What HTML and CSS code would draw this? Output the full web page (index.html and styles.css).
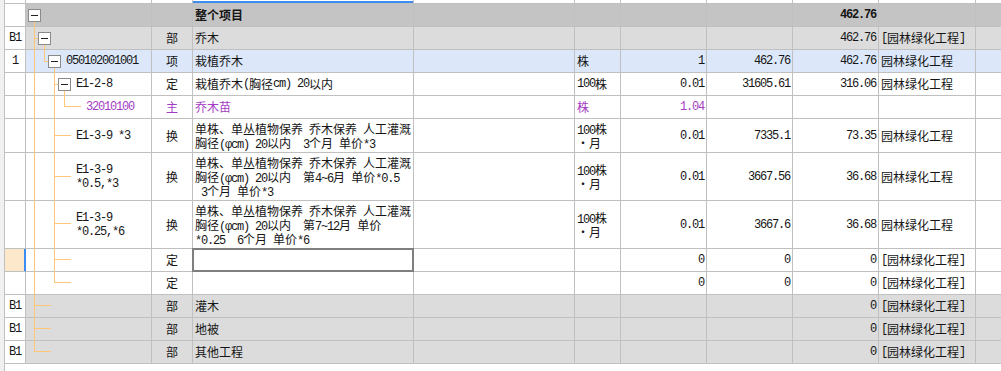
FILE: index.html
```html
<!DOCTYPE html>
<html lang="zh-CN">
<head>
<meta charset="utf-8">
<title>整个项目</title>
<link rel="stylesheet" href="styles.css">
</head>
<body>
<div class="page">
  <div class="strip"></div>
  <div class="grid">
    <div class="row hdr">
      <div></div><div></div><div></div><div class="sel"></div><div></div><div></div><div></div><div></div><div></div><div></div><div></div>
    </div>
    <div class="row g0">
      <div class="a"></div><div class="t"></div><div class="k"></div><div class="n b">整个项目</div><div></div><div></div><div class="num"></div><div class="num"></div><div class="num b">462.76</div><div class="j"></div><div></div>
    </div>
    <div class="row g1">
      <div class="a m">B1</div><div class="t"></div><div class="k">部</div><div class="n">乔木</div><div></div><div></div><div class="num"></div><div class="num"></div><div class="num">462.76</div><div class="j"><span class="m">[</span>园林绿化工程<span class="m">]</span></div><div></div>
    </div>
    <div class="row bl">
      <div class="a m">1</div><div class="t l2 m">050102001001</div><div class="k">项</div><div class="n">栽植乔木</div><div></div><div class="u">株</div><div class="num">1</div><div class="num">462.76</div><div class="num">462.76</div><div class="j">园林绿化工程</div><div></div>
    </div>
    <div class="row">
      <div class="a"></div><div class="t l3 m">E1-2-8</div><div class="k">定</div><div class="n">栽植乔木<span class="m">(</span>胸径<span class="m">cm) 20</span>以内</div><div></div><div class="u"><span class="m">100</span>株</div><div class="num">0.01</div><div class="num">31605.61</div><div class="num">316.06</div><div class="j">园林绿化工程</div><div></div>
    </div>
    <div class="row pu">
      <div class="a"></div><div class="t l4 m">32010100</div><div class="k">主</div><div class="n">乔木苗</div><div></div><div class="u">株</div><div class="num">1.04</div><div class="num"></div><div class="num"></div><div class="j"></div><div></div>
    </div>
    <div class="row h34">
      <div class="a"></div><div class="t l3 m">E1-3-9 *3</div><div class="k">换</div>
      <div class="n"><div class="ml">单株、单丛植物保养<span class="m"> </span>乔木保养<span class="m"> </span>人工灌溉<br>胸径<span class="m">(φcm) 20</span>以内<span class="m">  3</span>个月<span class="m"> </span>单价<span class="m">*3</span></div></div>
      <div></div><div class="u"><div class="ml"><span class="m">100</span>株<br><span class="dot">·</span>月</div></div><div class="num">0.01</div><div class="num">7335.1</div><div class="num">73.35</div><div class="j">园林绿化工程</div><div></div>
    </div>
    <div class="row h48">
      <div class="a"></div><div class="t l3 m"><div class="ml">E1-3-9<br>*0.5,*3</div></div><div class="k">换</div>
      <div class="n"><div class="ml">单株、单丛植物保养<span class="m"> </span>乔木保养<span class="m"> </span>人工灌溉<br>胸径<span class="m">(φcm) 20</span>以内<span class="m">  </span>第<span class="m">4~6</span>月<span class="m"> </span>单价<span class="m">*0.5</span><br><span class="m"> 3</span>个月<span class="m"> </span>单价<span class="m">*3</span></div></div>
      <div></div><div class="u"><div class="ml"><span class="m">100</span>株<br><span class="dot">·</span>月</div></div><div class="num">0.01</div><div class="num">3667.56</div><div class="num">36.68</div><div class="j">园林绿化工程</div><div></div>
    </div>
    <div class="row h48">
      <div class="a"></div><div class="t l3 m"><div class="ml">E1-3-9<br>*0.25,*6</div></div><div class="k">换</div>
      <div class="n"><div class="ml">单株、单丛植物保养<span class="m"> </span>乔木保养<span class="m"> </span>人工灌溉<br>胸径<span class="m">(φcm) 20</span>以内<span class="m">  </span>第<span class="m">7~12</span>月<span class="m"> </span>单价<br><span class="m">*0.25  6</span>个月<span class="m"> </span>单价<span class="m">*6</span></div></div>
      <div></div><div class="u"><div class="ml"><span class="m">100</span>株<br><span class="dot">·</span>月</div></div><div class="num">0.01</div><div class="num">3667.6</div><div class="num">36.68</div><div class="j">园林绿化工程</div><div></div>
    </div>
    <div class="row">
      <div class="a cur"></div><div class="t"></div><div class="k">定</div><div class="n edit"></div><div></div><div class="u"></div><div class="num">0</div><div class="num">0</div><div class="num">0</div><div class="j"><span class="m">[</span>园林绿化工程<span class="m">]</span></div><div></div>
    </div>
    <div class="row">
      <div class="a"></div><div class="t"></div><div class="k">定</div><div class="n"></div><div></div><div class="u"></div><div class="num">0</div><div class="num">0</div><div class="num">0</div><div class="j"><span class="m">[</span>园林绿化工程<span class="m">]</span></div><div></div>
    </div>
    <div class="row g1">
      <div class="a m">B1</div><div class="t"></div><div class="k">部</div><div class="n">灌木</div><div></div><div></div><div class="num"></div><div class="num"></div><div class="num">0</div><div class="j"><span class="m">[</span>园林绿化工程<span class="m">]</span></div><div></div>
    </div>
    <div class="row g1">
      <div class="a m">B1</div><div class="t"></div><div class="k">部</div><div class="n">地被</div><div></div><div></div><div class="num"></div><div class="num"></div><div class="num">0</div><div class="j"><span class="m">[</span>园林绿化工程<span class="m">]</span></div><div></div>
    </div>
    <div class="row g1">
      <div class="a m">B1</div><div class="t"></div><div class="k">部</div><div class="n">其他工程</div><div></div><div></div><div class="num"></div><div class="num"></div><div class="num">0</div><div class="j"><span class="m">[</span>园林绿化工程<span class="m">]</span></div><div></div>
    </div>
  </div>
  <svg class="tree" width="1001" height="371" viewBox="0 0 1001 371">
    <g fill="none" stroke="#ffc878" stroke-width="1">
      <path d="M34.5 22V352M35 38.5H38M35 305.5H51M35 328.5H51M35 351.5H51"/>
      <path d="M44.5 45V62M45 61.5H48"/>
      <path d="M54.5 68V283M55 84.5H58M55 135.5H71M55 176.5H71M55 223.5H71M55 259.5H71M55 282.5H71"/>
      <path d="M64.5 91V107M65 106.5H81"/>
    </g>
    <g fill="#fff" stroke="#8a8a8a" stroke-width="1">
      <rect x="28.5" y="9.5" width="12" height="12"/>
      <rect x="38.5" y="32.5" width="12" height="12"/>
      <rect x="48.5" y="55.5" width="12" height="12"/>
      <rect x="58.5" y="78.5" width="12" height="12"/>
    </g>
    <g stroke="#222" stroke-width="1">
      <path d="M31 15.5H38M41 38.5H48M51 61.5H58M61 84.5H68"/>
    </g>
  </svg>
</div>
</body>
</html>
```

FILE: styles.css
```css
* {
  box-sizing: border-box;
  margin: 0;
  padding: 0;
}

body {
  margin: 0;
  background: #fff;
  font-family: "Noto Sans CJK SC", sans-serif;
  font-size: 12px;
  color: #151515;
}

.page {
  position: relative;
  display: flex;
  width: 1001px;
  height: 371px;
  overflow: hidden;
}

.strip {
  flex: none;
  width: 5px;
  background: #f0f0f0;
  border-right: 1px solid #c0c0c0;
}

.grid {
  flex: 1;
  display: flex;
  flex-direction: column;
}

.row {
  display: grid;
  grid-template-columns: 21px 126px 41px 221px 161px 46px 86px 86px 86px 97px 1fr;
  height: 23px;
  flex: none;
}

.row > div {
  display: flex;
  align-items: center;
  min-width: 0;
  padding: 0 2px;
  border-right: 1px solid #c0c0c0;
  border-bottom: 1px solid #c0c0c0;
  line-height: 14px;
  white-space: nowrap;
}

.row > div:last-child {
  border-right: none;
}

.ml {
  line-height: 14px;
}

.ml .m {
  line-height: 0;
}

.hdr {
  height: 4px;
}

.hdr > .sel {
  box-shadow: inset 0 -2px 0 #3d8ef0;
}

.h34 {
  height: 34px;
}

.h48 {
  height: 48px;
}

.m {
  font-family: "Liberation Mono", monospace;
  letter-spacing: -1.2px;
  white-space: pre;
}

.b {
  font-weight: bold;
}

.a {
  justify-content: center;
  background: #fff;
}

.k {
  justify-content: center;
}

.num {
  justify-content: flex-end;
  font-family: "Liberation Mono", monospace;
  letter-spacing: -1.2px;
}

.t.l2 {
  padding-left: 40px;
}

.t.l3 {
  padding-left: 50px;
}

.t.l4 {
  padding-left: 60px;
}

.dot {
  display: inline-block;
  width: 12px;
  text-align: center;
}

.g0 > div {
  background: #c4c4c4;
}

.g1 > div {
  background: #dcdcdc;
}

.bl > div {
  background: #dce8fa;
}

.g0 > .a,
.g1 > .a,
.bl > .a {
  background: #fff;
}

.pu > div {
  color: #a53cc4;
}

.cur {
  background: #fde8cc;
  border-right-color: #3b8cf0 !important;
  box-shadow: inset -1px 0 0 #3b8cf0;
}

.edit {
  position: relative;
}

.edit::after {
  content: "";
  position: absolute;
  left: -1px;
  top: -1px;
  right: -1px;
  bottom: -1px;
  border: 2px solid #7f7f7f;
}

.tree {
  position: absolute;
  left: 0;
  top: 0;
  pointer-events: none;
}
```
